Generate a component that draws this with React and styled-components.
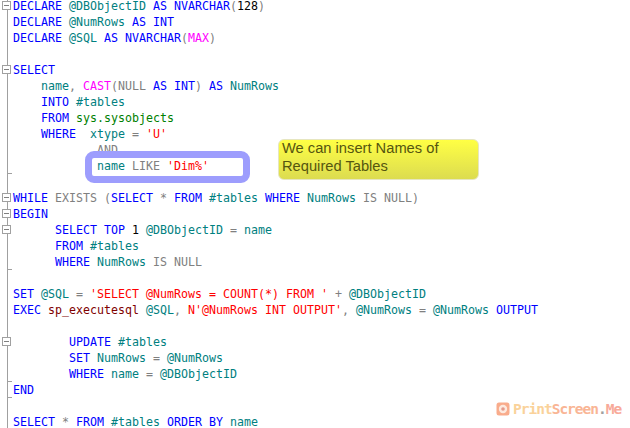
import React from 'react';
import styled, { createGlobalStyle } from 'styled-components';

const Global = createGlobalStyle`
  html, body { margin: 0; padding: 0; background: #fff; }
  #root { width: 630px; height: 428px; overflow: hidden; }
`;

const Page = styled.div`
  position: relative;
  width: 630px;
  height: 428px;
  overflow: hidden;
  background: #fff;
`;

const Editor = styled.div`
  display: flex;
  flex-direction: column;
  margin-top: -2px;
  font-family: "DejaVu Sans Mono", monospace;
  font-size: 11.63px;
  line-height: 16px;
`;

const Row = styled.div`
  display: flex;
  height: 16px;
  flex: none;
`;

const Gutter = styled.div`
  flex: none;
  width: 13px;
  height: 16px;
  box-sizing: border-box;
  padding: 3px 0 0 2px;
  background:
    ${p => (p.$fold === 'end' ? 'linear-gradient(#a0a0a0, #a0a0a0) 7px 15px / 5px 1px no-repeat,' : '')}
    linear-gradient(#a0a0a0, #a0a0a0) 7px 0 / 1px 100% no-repeat;
`;

const FoldBox = styled.span`
  display: block;
  width: 9px;
  height: 9px;
  box-sizing: border-box;
  border: 1px solid #a0a0a0;
  background: linear-gradient(#808080, #808080) center / 5px 1px no-repeat #fff;
`;

const Code = styled.pre`
  margin: 0;
  font: inherit;
  white-space: pre;
`;

const colors = {
  k: '#0000ff',
  v: '#008080',
  g: '#808080',
  f: '#ff00ff',
  s: '#ff0000',
  o: '#008000',
  m: '#800000',
  n: '#000000',
};

const Token = styled.span`
  color: ${p => colors[p.$kind]};
`;

const Highlight = styled.div`
  position: absolute;
  left: 85px;
  top: 151px;
  width: 165px;
  height: 32px;
  box-sizing: border-box;
  border: 7px solid #9d9dfd;
  border-radius: 9px;
`;

const Note = styled.div`
  position: absolute;
  left: 278px;
  top: 139px;
  width: 201px;
  height: 41px;
  box-sizing: border-box;
  padding-left: 3px;
  border-radius: 6px;
  border: 1px solid #e6e6c0;
  background: linear-gradient(#ffff44, #dcdc50);
  color: #55550f;
  font-family: "Liberation Sans", Arial, sans-serif;
  font-size: 14.7px;
  line-height: 18px;
`;

const NoteText = styled.p`
  margin: -1px 0 0;
`;

const Watermark = styled.div`
  position: absolute;
  left: 496px;
  top: 400px;
  display: flex;
  align-items: center;
  gap: 3px;
  font-family: "DejaVu Sans Mono", monospace;
  font-weight: 700;
  font-size: 14.5px;
  letter-spacing: -1px;
  line-height: 18px;
`;

const MarkText = styled.span`
  color: ${p => p.$color};
`;

const rows = [
  ['open', [['k','DECLARE '],['v','@DBObjectID '],['k','AS NVARCHAR'],['g','('],['n','128'],['g',')']]],
  ['', [['k','DECLARE '],['v','@NumRows '],['k','AS INT']]],
  ['', [['k','DECLARE '],['v','@SQL '],['k','AS NVARCHAR'],['g','('],['f','MAX'],['g',')']]],
  ['', []],
  ['open', [['k','SELECT']]],
  ['', [['v','    name'],['g',', '],['f','CAST'],['g','(NULL '],['k','AS INT'],['g',') '],['k','AS '],['v','NumRows']]],
  ['', [['k','    INTO '],['v','#tables']]],
  ['', [['k','    FROM '],['o','sys.sysobjects']]],
  ['', [['k','    WHERE  '],['v','xtype '],['g','= '],['s',"'U'"]]],
  ['', [['g','            AND']]],
  ['end', [['v','            name '],['g','LIKE '],['s',"'Dim%'"]]],
  ['', []],
  ['open', [['k','WHILE '],['g','EXISTS ('],['k','SELECT '],['g','* '],['k','FROM '],['v','#tables '],['k','WHERE '],['v','NumRows '],['g','IS NULL)']]],
  ['open', [['k','BEGIN']]],
  ['open', [['k','      SELECT TOP '],['n','1 '],['v','@DBObjectID '],['g','= '],['v','name']]],
  ['', [['k','      FROM '],['v','#tables']]],
  ['end', [['k','      WHERE '],['v','NumRows '],['g','IS NULL']]],
  ['', []],
  ['', [['k','SET '],['v','@SQL '],['g','= '],['s',"'SELECT @NumRows = COUNT(*) FROM ' "],['g','+ '],['v','@DBObjectID']]],
  ['', [['k','EXEC '],['m','sp_executesql '],['v','@SQL'],['g',', '],['s',"N'@NumRows INT OUTPUT'"],['g',', '],['v','@NumRows '],['g','= '],['v','@NumRows '],['k','OUTPUT']]],
  ['', []],
  ['open', [['k','        UPDATE '],['v','#tables']]],
  ['', [['k','        SET '],['v','NumRows '],['g','= '],['v','@NumRows']]],
  ['end', [['k','        WHERE '],['v','name '],['g','= '],['v','@DBObjectID']]],
  ['end', [['k','END']]],
  ['', []],
  ['', [['k','SELECT '],['g','* '],['k','FROM '],['v','#tables '],['k','ORDER BY '],['v','name']]],
];

const Logo = () => (
  <svg width="14" height="14" viewBox="0 0 14 14" aria-hidden="true">
    <rect x="0.5" y="0.5" width="13" height="13" rx="2.5" fill="#f9ac8c" />
    <circle cx="7" cy="7" r="4.2" fill="#fdeadf" />
    <circle cx="7" cy="7" r="1.8" fill="#e39a8c" />
  </svg>
);

export default function App() {
  return (
    <Page>
      <Global />
      <Editor>
        {rows.map(([fold, tokens], i) => (
          <Row key={i}>
            <Gutter $fold={fold}>
              {fold === 'open' && <FoldBox />}
            </Gutter>
            <Code>
              {tokens.map(([kind, text], j) => (
                <Token key={j} $kind={kind}>{text}</Token>
              ))}
            </Code>
          </Row>
        ))}
      </Editor>
      <Highlight />
      <Note><NoteText>We can insert Names of Required Tables</NoteText></Note>
      <Watermark>
        <Logo />
        <span>
          <MarkText $color="#fad29a">Print</MarkText>
          <MarkText $color="#f9b595">Screen</MarkText>
          <MarkText $color="#a0a0a0">.</MarkText>
          <MarkText $color="#f8aa9a">Me</MarkText>
        </span>
      </Watermark>
    </Page>
  );
}
